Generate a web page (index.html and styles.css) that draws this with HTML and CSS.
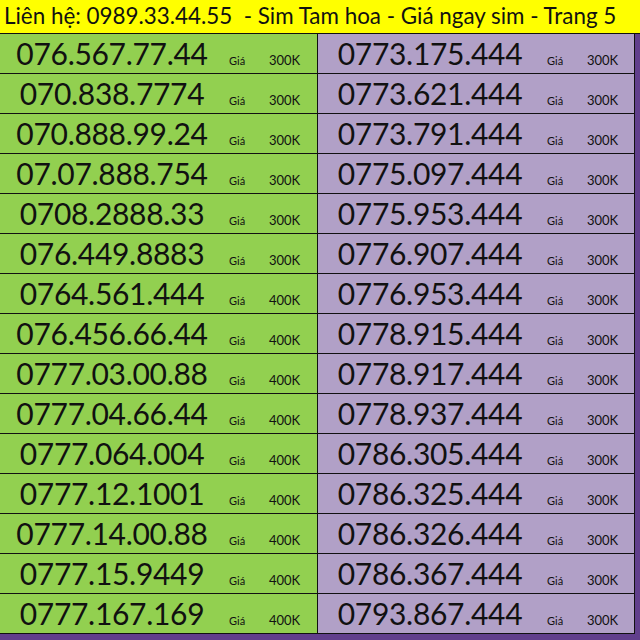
FILE: index.html
```html
<!DOCTYPE html>
<html lang="vi">
<head>
  <meta charset="UTF-8" />
  <meta name="viewport" content="width=device-width, initial-scale=1.0"/>
  <title>Sim Tam hoa - Trang 5</title>
  <link rel="stylesheet" href="styles.css">
</head>
<body>
  <div class="header">Liên hệ: 0989.33.44.55  - Sim Tam hoa - Giá ngay sim - Trang 5</div>

  <div class="board">
    <div class="cell left"><span class="num">076.567.77.44</span><span class="lbl">Giá</span><span class="price">300K</span></div>
    <div class="cell right"><span class="num">0773.175.444</span><span class="lbl">Giá</span><span class="price">300K</span></div>

    <div class="cell left"><span class="num">070.838.7774</span><span class="lbl">Giá</span><span class="price">300K</span></div>
    <div class="cell right"><span class="num">0773.621.444</span><span class="lbl">Giá</span><span class="price">300K</span></div>

    <div class="cell left"><span class="num">070.888.99.24</span><span class="lbl">Giá</span><span class="price">300K</span></div>
    <div class="cell right"><span class="num">0773.791.444</span><span class="lbl">Giá</span><span class="price">300K</span></div>

    <div class="cell left"><span class="num">07.07.888.754</span><span class="lbl">Giá</span><span class="price">300K</span></div>
    <div class="cell right"><span class="num">0775.097.444</span><span class="lbl">Giá</span><span class="price">300K</span></div>

    <div class="cell left"><span class="num">0708.2888.33</span><span class="lbl">Giá</span><span class="price">300K</span></div>
    <div class="cell right"><span class="num">0775.953.444</span><span class="lbl">Giá</span><span class="price">300K</span></div>

    <div class="cell left"><span class="num">076.449.8883</span><span class="lbl">Giá</span><span class="price">300K</span></div>
    <div class="cell right"><span class="num">0776.907.444</span><span class="lbl">Giá</span><span class="price">300K</span></div>

    <div class="cell left"><span class="num">0764.561.444</span><span class="lbl">Giá</span><span class="price">400K</span></div>
    <div class="cell right"><span class="num">0776.953.444</span><span class="lbl">Giá</span><span class="price">300K</span></div>

    <div class="cell left"><span class="num">076.456.66.44</span><span class="lbl">Giá</span><span class="price">400K</span></div>
    <div class="cell right"><span class="num">0778.915.444</span><span class="lbl">Giá</span><span class="price">300K</span></div>

    <div class="cell left"><span class="num">0777.03.00.88</span><span class="lbl">Giá</span><span class="price">400K</span></div>
    <div class="cell right"><span class="num">0778.917.444</span><span class="lbl">Giá</span><span class="price">300K</span></div>

    <div class="cell left"><span class="num">0777.04.66.44</span><span class="lbl">Giá</span><span class="price">400K</span></div>
    <div class="cell right"><span class="num">0778.937.444</span><span class="lbl">Giá</span><span class="price">300K</span></div>

    <div class="cell left"><span class="num">0777.064.004</span><span class="lbl">Giá</span><span class="price">400K</span></div>
    <div class="cell right"><span class="num">0786.305.444</span><span class="lbl">Giá</span><span class="price">300K</span></div>

    <div class="cell left"><span class="num">0777.12.1001</span><span class="lbl">Giá</span><span class="price">400K</span></div>
    <div class="cell right"><span class="num">0786.325.444</span><span class="lbl">Giá</span><span class="price">300K</span></div>

    <div class="cell left"><span class="num">0777.14.00.88</span><span class="lbl">Giá</span><span class="price">400K</span></div>
    <div class="cell right"><span class="num">0786.326.444</span><span class="lbl">Giá</span><span class="price">300K</span></div>

    <div class="cell left"><span class="num">0777.15.9449</span><span class="lbl">Giá</span><span class="price">400K</span></div>
    <div class="cell right"><span class="num">0786.367.444</span><span class="lbl">Giá</span><span class="price">300K</span></div>

    <div class="cell left"><span class="num">0777.167.169</span><span class="lbl">Giá</span><span class="price">400K</span></div>
    <div class="cell right"><span class="num">0793.867.444</span><span class="lbl">Giá</span><span class="price">300K</span></div>
  </div>
</body>
</html>
```

FILE: styles.css
```css
body {
  margin: 0;
  padding: 0;
  background: #613f8c;
  font-family: Lato, 'Open Sans', sans-serif;
  color: #111;
  width: 640px;
  height: 640px;
  overflow: hidden;
}

.header {
  height: 33px;
  padding-left: 4px;
  background: #ffff00;
  border-bottom: 1px solid #111;
  font-size: 22.4px;
  line-height: 32px;
  white-space: pre;
}

.board {
  display: grid;
  grid-template-columns: 318px 317px;
  grid-auto-rows: 40px;
}

.cell {
  display: flex;
  align-items: baseline;
  border-bottom: 1px solid #111;
  border-right: 1px solid #111;
}

.cell.left {
  background: #92d050;
}

.cell.right {
  background: #b1a0c7;
}

.num {
  width: 224px;
  flex: none;
  text-align: center;
  font-size: 30px;
  line-height: 38px;
  letter-spacing: -0.3px;
}

.lbl {
  margin-left: 5px;
  width: 40px;
  font-size: 11px;
}

.price {
  font-size: 13px;
}
```
